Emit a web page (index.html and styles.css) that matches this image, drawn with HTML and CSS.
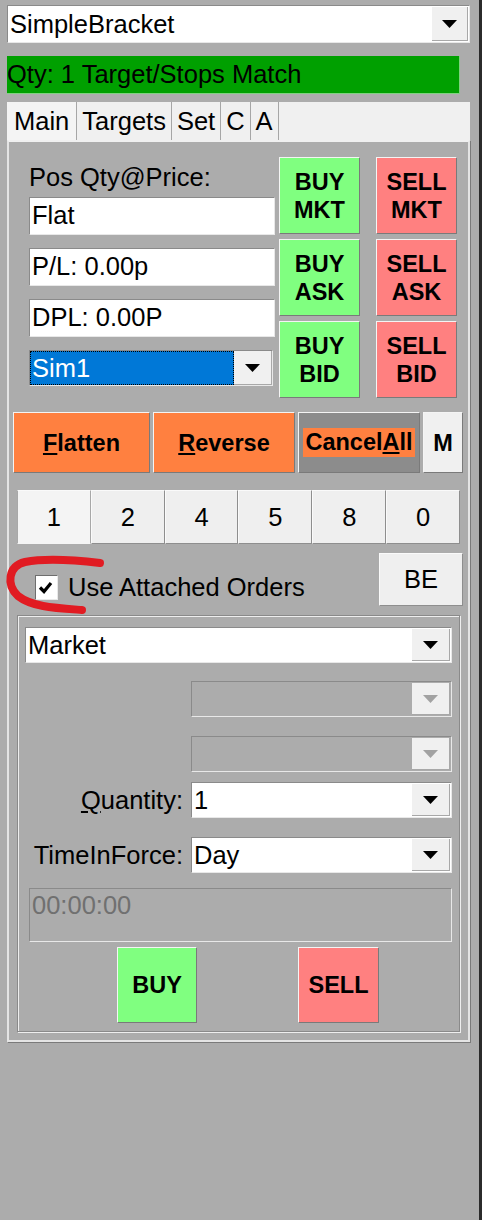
FILE: index.html
```html
<!DOCTYPE html>
<html lang="en">
<head>
    <meta charset="UTF-8">
    <meta name="viewport" content="width=device-width, initial-scale=1.0">
    <title>SimpleBracket</title>
    <link rel="stylesheet" href="styles.css">
</head>
<body>

    <div class="window">
        <div class="combo strategy">
            <span class="combo-value">SimpleBracket</span>
            <span class="combo-drop"><svg width="15" height="8" viewBox="0 0 15 8"><path d="M0 0H15L7.5 8Z"/></svg></span>
        </div>

        <div class="status-bar">Qty: 1 Target/Stops Match</div>

        <div class="tabs">
            <span class="tab active">Main</span>
            <span class="tab">Targets</span>
            <span class="tab">Set</span>
            <span class="tab">C</span>
            <span class="tab">A</span>
        </div>

        <div class="panel">
            <div class="position">
                <div class="position-info">
                    <div class="pos-label">Pos Qty@Price:</div>
                    <div class="textbox">Flat</div>
                    <div class="textbox">P/L: 0.00p</div>
                    <div class="textbox">DPL: 0.00P</div>
                    <div class="combo account">
                        <span class="combo-value">Sim1</span>
                        <span class="combo-drop"><svg width="15" height="8" viewBox="0 0 15 8"><path d="M0 0H15L7.5 8Z"/></svg></span>
                    </div>
                </div>
                <div class="quick-orders">
                    <button class="btn buy">BUY<br>MKT</button>
                    <button class="btn sell">SELL<br>MKT</button>
                    <button class="btn buy">BUY<br>ASK</button>
                    <button class="btn sell">SELL<br>ASK</button>
                    <button class="btn buy">BUY<br>BID</button>
                    <button class="btn sell">SELL<br>BID</button>
                </div>
            </div>

            <div class="actions">
                <button class="btn orange flatten"><u>F</u>latten</button>
                <button class="btn orange reverse"><u>R</u>everse</button>
                <button class="btn cancel-all"><span>Cancel<u>A</u>ll</span></button>
                <button class="btn plain m-btn">M</button>
            </div>

            <div class="presets">
                <button class="preset current">1</button>
                <button class="preset">2</button>
                <button class="preset">4</button>
                <button class="preset">5</button>
                <button class="preset">8</button>
                <button class="preset">0</button>
            </div>

            <div class="attached">
                <label class="use-attached">
                    <span class="checkbox"><svg width="21" height="23" viewBox="0 0 21 23"><path d="M4 11.5L8 15.5L15 7" fill="none" stroke="#000" stroke-width="3.2"/></svg></span>
                    Use Attached Orders
                </label>
                <button class="preset be">BE</button>
            </div>

            <div class="order-group">
                <div class="combo">
                    <span class="combo-value">Market</span>
                    <span class="combo-drop"><svg width="15" height="8" viewBox="0 0 15 8"><path d="M0 0H15L7.5 8Z"/></svg></span>
                </div>
                <div class="combo disabled first-off">
                    <span class="combo-value"></span>
                    <span class="combo-drop"><svg width="15" height="8" viewBox="0 0 15 8"><path d="M0 0H15L7.5 8Z"/></svg></span>
                </div>
                <div class="combo disabled second-off">
                    <span class="combo-value"></span>
                    <span class="combo-drop"><svg width="15" height="8" viewBox="0 0 15 8"><path d="M0 0H15L7.5 8Z"/></svg></span>
                </div>
                <div class="form-row qty-row">
                    <label><u>Q</u>uantity:</label>
                    <div class="combo">
                        <span class="combo-value">1</span>
                        <span class="combo-drop"><svg width="15" height="8" viewBox="0 0 15 8"><path d="M0 0H15L7.5 8Z"/></svg></span>
                    </div>
                </div>
                <div class="form-row tif-row">
                    <label>TimeInForce:</label>
                    <div class="combo">
                        <span class="combo-value">Day</span>
                        <span class="combo-drop"><svg width="15" height="8" viewBox="0 0 15 8"><path d="M0 0H15L7.5 8Z"/></svg></span>
                    </div>
                </div>
                <div class="time-box">00:00:00</div>
                <div class="order-buttons">
                    <button class="btn buy">BUY</button>
                    <button class="btn sell">SELL</button>
                </div>
            </div>
        </div>

        <!-- marker stroke drawn over the checkbox row -->
        <svg class="scribble" width="110" height="70" viewBox="0 550 110 70">
            <path d="M100 563C75 560 45 558 25 562C8 566 6 585 18 596C32 607 55 608 82 610" fill="none" stroke="#e11b22" stroke-width="8" stroke-linecap="round"/>
        </svg>
    </div>

</body>
</html>
```

FILE: styles.css
```css
body {
    margin: 0;
    background-color: #2b2b2b;
    font-family: "Liberation Sans", Arial, sans-serif;
    font-size: 25.5px;
    color: #000000;
}

.window {
    position: relative;
    width: 479px;
    height: 1220px;
    box-sizing: border-box;
    padding: 5px 0 0 7px;
    background-color: #acacac;
}

button {
    font-family: inherit;
    color: #000000;
    margin: 0;
    padding: 0;
    cursor: pointer;
}

/* combo boxes */
.combo {
    display: flex;
    box-sizing: border-box;
    height: 36px;
    padding: 1px;
    background-color: #ffffff;
    border: 1px solid;
    border-color: #8a8a8a #e8e8e8 #e8e8e8 #8a8a8a;
}

.combo-value {
    flex: 1;
    align-self: center;
    padding-left: 1px;
    line-height: 29px;
    white-space: nowrap;
    overflow: hidden;
}

.combo-drop {
    width: 38px;
    display: flex;
    align-items: center;
    justify-content: center;
    box-sizing: border-box;
    background-color: #f0f0f0;
    border-right: 1px solid #a8a8a8;
    border-bottom: 1px solid #a8a8a8;
}

.combo.strategy {
    width: 463px;
    height: 38px;
}

.combo.strategy .combo-drop {
    width: 36px;
}

.combo.account {
    width: 244px;
    margin-top: 13px;
    padding: 0;
}

.combo.account .combo-value {
    align-self: stretch;
    padding-left: 2px;
    line-height: 34px;
    background-color: #0078d7;
    color: #ffffff;
    outline: 1px dotted #000000;
    outline-offset: -1px;
}

.combo.disabled {
    margin-left: 166px;
    background-color: transparent;
}

.combo.disabled .combo-drop svg {
    fill: #a2a2a2;
}

.first-off {
    margin-top: 18px;
}

.second-off {
    margin-top: 19px;
}

/* status and tabs */
.status-bar {
    width: 453px;
    height: 38px;
    box-sizing: border-box;
    margin-top: 13px;
    background-color: #00a000;
    border-right: 1px solid #7fd27f;
    border-bottom: 1px solid #7fd27f;
    line-height: 36px;
    white-space: nowrap;
}

.tabs {
    display: flex;
    width: 463px;
    height: 38px;
    margin-top: 8px;
    background-color: #f0f0f0;
}

.tab {
    padding: 0 5px;
    line-height: 38px;
    border-right: 1px solid #a6a6a6;
}

.tab.active {
    padding: 0 7px;
    background-color: #f4f4f4;
}

.panel {
    width: 463px;
    box-sizing: border-box;
    padding: 15px 0 8px 0;
    border: 2px solid #e4e4e4;
    border-top-color: #f0f0f0;
    box-shadow: 1px 1px 0 #7a7a7a;
}

/* position block */
.position {
    display: flex;
    gap: 4px;
    margin-left: 20px;
}

.position-info {
    width: 246px;
}

.pos-label {
    height: 40px;
    box-sizing: border-box;
    padding-top: 6px;
    line-height: 29px;
}

.textbox {
    height: 38px;
    box-sizing: border-box;
    padding-left: 2px;
    background-color: #ffffff;
    border: 1px solid;
    border-color: #8a8a8a #e8e8e8 #e8e8e8 #8a8a8a;
    line-height: 35px;
    white-space: nowrap;
}

.textbox + .textbox {
    margin-top: 13px;
}

.quick-orders {
    display: grid;
    grid-template-columns: 81px 81px;
    grid-auto-rows: 77px;
    column-gap: 16px;
    row-gap: 5px;
}

.btn {
    box-sizing: border-box;
    border: 1px solid;
    border-color: #f4f4f4 #7a7a7a #7a7a7a #f4f4f4;
    font-size: 23.5px;
    font-weight: bold;
    line-height: 28px;
    text-align: center;
}

.btn.buy {
    background-color: #80ff80;
}

.btn.sell {
    background-color: #ff8080;
}

/* flatten / reverse row */
.actions {
    display: flex;
    gap: 3px;
    height: 61px;
    margin: 14px 0 0 4px;
}

.btn.orange {
    background-color: #ff8040;
}

.flatten {
    width: 137px;
}

.reverse {
    width: 142px;
}

.cancel-all {
    width: 122px;
    background-color: #8c8c8c;
}

.cancel-all span {
    display: inline-block;
    padding: 0 2px;
    line-height: 29px;
    background-color: #ff8040;
}

.m-btn {
    width: 40px;
    background-color: #f0f0f0;
}

/* quantity presets */
.presets {
    display: flex;
    width: 443px;
    height: 54px;
    margin: 17px 0 0 8px;
}

.preset {
    flex: 1;
    box-sizing: border-box;
    background-color: #efefef;
    border: 1px solid;
    border-color: #fafafa #8e8e8e #8e8e8e #fafafa;
    font-size: 25.5px;
}

.preset.current {
    background-color: #f4f4f4;
    border-color: #fafafa #a8a8a8 #f4f4f4 #a8a8a8;
}

.attached {
    display: flex;
    align-items: flex-start;
    height: 53px;
    margin-top: 9px;
}

.use-attached {
    display: flex;
    align-items: center;
    margin: 20px 0 0 26px;
    line-height: 29px;
}

.checkbox {
    width: 23px;
    height: 25px;
    box-sizing: border-box;
    margin-right: 10px;
    background-color: #ffffff;
    border: 1px solid;
    border-color: #6e6e6e #e8e8e8 #e8e8e8 #6e6e6e;
}

.checkbox svg {
    display: block;
}

.preset.be {
    flex: none;
    width: 84px;
    height: 53px;
    margin: 0 5px 0 auto;
}

/* order entry group */
.order-group {
    width: 443px;
    box-sizing: border-box;
    margin: 9px 0 0 8px;
    padding: 11px 7px 8px 7px;
    border: 1px solid #8a8a8a;
    box-shadow: 1px 1px 0 #eeeeee, inset 1px 1px 0 #eeeeee;
}

.form-row {
    display: grid;
    grid-template-columns: 166px 1fr;
    align-items: center;
}

.form-row label {
    padding-right: 8px;
    text-align: right;
    white-space: nowrap;
}

.qty-row {
    margin-top: 10px;
}

.tif-row {
    margin-top: 19px;
}

.time-box {
    height: 54px;
    box-sizing: border-box;
    margin: 15px 0 0 4px;
    padding: 2px 2px 0 2px;
    border: 1px solid;
    border-color: #8a8a8a #e8e8e8 #e8e8e8 #8a8a8a;
    color: #707070;
    line-height: 29px;
}

.order-buttons {
    display: flex;
    height: 76px;
    margin-top: 5px;
}

.order-buttons .buy {
    width: 80px;
    margin-left: 92px;
}

.order-buttons .sell {
    width: 81px;
    margin-left: 101px;
}

.scribble {
    position: absolute;
    left: 0;
    top: 550px;
}
```
